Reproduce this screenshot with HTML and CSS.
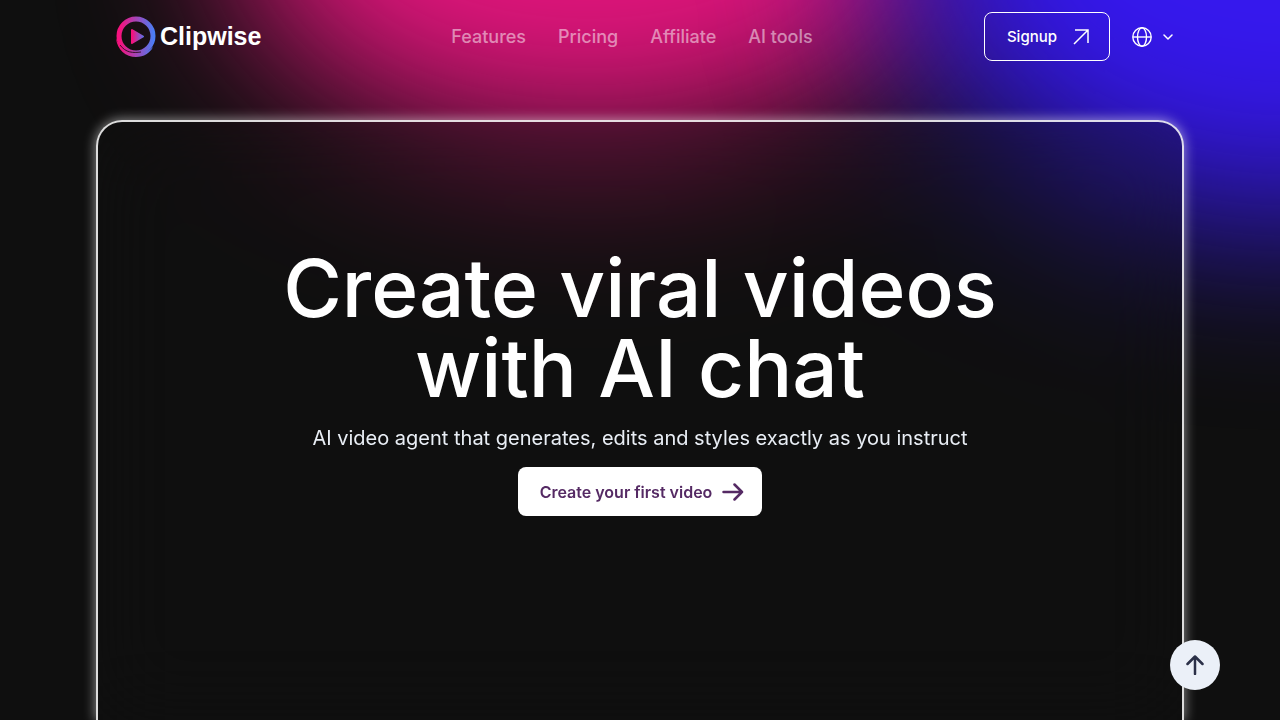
FILE: index.html
```
<!DOCTYPE html>
<html lang="en">
<head>
    <meta charset="UTF-8">
    <meta name="viewport" content="width=device-width, initial-scale=1.0">
    <title>Clipwise</title>
    <link rel="stylesheet" href="styles.css">
</head>
<body>
    <div class="glow">
        <div class="glow-pink"></div>
        <div class="glow-blue"></div>
    </div>

    <header class="header">
        <a class="logo" href="#">
            <svg width="42" height="42" viewBox="0 0 42 42" fill="none">
                <defs>
                    <linearGradient id="ring" x1="0" y1="0" x2="42" y2="0" gradientUnits="userSpaceOnUse">
                        <stop offset="0.1" stop-color="#f5127e"/>
                        <stop offset="0.9" stop-color="#4a7df5"/>
                    </linearGradient>
                    <linearGradient id="play" x1="15" y1="0" x2="29" y2="0" gradientUnits="userSpaceOnUse">
                        <stop offset="0.1" stop-color="#f5127e"/>
                        <stop offset="1" stop-color="#4a7df5"/>
                    </linearGradient>
                </defs>
                <circle cx="20" cy="20" r="17" stroke="url(#ring)" stroke-width="5"/>
                <path d="M0 22C1 34 10 41 20 41C28 41 34 37 37 31C32 36 26 38 19 37C9 37 3 31 0 22Z" fill="url(#ring)"/>
                <path d="M4 29C10 37 17 37 25 36" stroke="#37102a" stroke-width="1"/>
                <path d="M16 14L27 20.500L16 27Z" fill="url(#play)" stroke="url(#play)" stroke-width="2" stroke-linejoin="round"/>
            </svg>
            <span>Clipwise</span>
        </a>

        <nav class="nav">
            <a href="#">Features</a>
            <a href="#">Pricing</a>
            <a href="#">Affiliate</a>
            <a href="#">AI tools</a>
        </nav>

        <div class="actions">
            <a class="signup" href="#">
                Signup
                <svg width="16" height="16" viewBox="0 0 16 16" fill="none" stroke="currentColor" stroke-width="1.5">
                    <path d="M1 15L15 1M2 1H15V14"/>
                </svg>
            </a>
            <button class="language" type="button" aria-label="Language">
                <svg width="20" height="20" viewBox="0 0 20 20" fill="none" stroke="currentColor" stroke-width="1.4">
                    <circle cx="10" cy="10" r="9.200"/>
                    <ellipse cx="10" cy="10" rx="4.500" ry="9.200"/>
                    <path d="M1 10H19"/>
                </svg>
                <svg width="10" height="6" viewBox="0 0 10 6" fill="none" stroke="currentColor" stroke-width="1.500" stroke-linecap="round" stroke-linejoin="round">
                    <path d="M1 1L5 5L9 1"/>
                </svg>
            </button>
        </div>
    </header>

    <main class="hero">
        <h1>Create viral videos with AI chat</h1>
        <p>AI video agent that generates, edits and styles exactly as you instruct</p>
        <a class="cta" href="#">
            Create your first video
            <svg width="22" height="18" viewBox="0 0 22 18" fill="none" stroke="currentColor" stroke-width="2.500" stroke-linecap="round" stroke-linejoin="round">
                <path d="M1.500 9H20M12.500 1.500L20 9L12.500 16.500"/>
            </svg>
        </a>
    </main>

    <button class="to-top" type="button" aria-label="Back to top">
        <svg width="18" height="20" viewBox="0 0 18 20" fill="none" stroke="currentColor" stroke-width="2.500" stroke-linecap="round" stroke-linejoin="round">
            <path d="M9 19V1.500M1.500 9L9 1.500L16.500 9"/>
        </svg>
    </button>
</body>
</html>
```
FILE: styles.css
```
* {
    box-sizing: border-box;
}
body {
    display: flex;
    flex-direction: column;
    margin: 0;
    height: 100vh;
    overflow: hidden;
    background: #0f0f0f;
    color: white;
    font-family: Inter, sans-serif;
}
a {
    color: inherit;
    text-decoration: none;
}
svg {
    display: block;
    flex-shrink: 0;
}

/* colour glow behind the page */
.glow {
    position: absolute;
    inset: 0;
    overflow: hidden;
    z-index: -1;
}
.glow-pink, .glow-blue {
    position: absolute;
    border-radius: 50%;
}
.glow-pink {
    top: -300px;
    left: 18%;
    width: 56%;
    height: 440px;
    background: #e0157c;
    filter: blur(80px);
}
.glow-blue {
    top: -340px;
    right: -32%;
    width: 62%;
    height: 560px;
    background: #3618ee;
    filter: blur(90px);
}

.header {
    display: grid;
    grid-template-columns: 1fr auto 1fr;
    align-items: center;
    width: 100%;
    max-width: 1088px;
    height: 73px;
    margin: 0 auto;
    padding: 0 11px 0 20px;
}
.logo {
    display: flex;
    align-items: center;
    gap: 2px;
    font-family: "Liberation Sans", Arial, sans-serif;
    font-size: 25px;
    font-weight: bold;
}
.nav {
    display: flex;
    gap: 32px;
    margin-right: 25px;
    color: rgba(255,255,255,0.5);
    font-size: 18px;
    font-weight: 500;
}
.actions {
    display: flex;
    justify-content: flex-end;
    align-items: center;
    gap: 22px;
}
.signup {
    display: flex;
    align-items: center;
    gap: 16px;
    height: 49px;
    padding: 0 20px 0 22px;
    border: 1px solid white;
    border-radius: 8px;
    font-size: 15px;
    font-weight: 500;
}
.language {
    display: flex;
    align-items: center;
    gap: 11px;
    padding: 0;
    background: none;
    border: none;
    color: white;
    cursor: pointer;
}

.hero {
    display: flex;
    flex: 1;
    flex-direction: column;
    align-items: center;
    width: 100%;
    max-width: 1088px;
    margin: 47px auto 0;
    padding: 126px 20px 0;
    background: rgba(15,15,15,0.3);
    backdrop-filter: blur(40px);
    border: 2px solid rgba(255,255,255,0.86);
    border-bottom: none;
    border-radius: 26px 26px 0 0;
    box-shadow: 0 0 12px 1px rgba(255,255,255,0.5);
    text-align: center;
}
h1 {
    max-width: 800px;
    margin: 0;
    font-size: 80px;
    font-weight: 500;
    line-height: 80px;
}
.hero p {
    margin: 16px 0 15px;
    color: #e9eef5;
    font-size: 20px;
    line-height: 28px;
}
.cta {
    display: flex;
    align-items: center;
    gap: 10px;
    height: 49px;
    padding: 0 18px 0 22px;
    background: white;
    border-radius: 8px;
    color: #552a64;
    font-size: 16px;
    font-weight: 600;
}

.to-top {
    position: fixed;
    right: 60px;
    bottom: 30px;
    display: flex;
    justify-content: center;
    align-items: center;
    width: 50px;
    height: 50px;
    padding: 0;
    background: #ebf0f8;
    border: none;
    border-radius: 50%;
    color: #2b3048;
    cursor: pointer;
}
```
